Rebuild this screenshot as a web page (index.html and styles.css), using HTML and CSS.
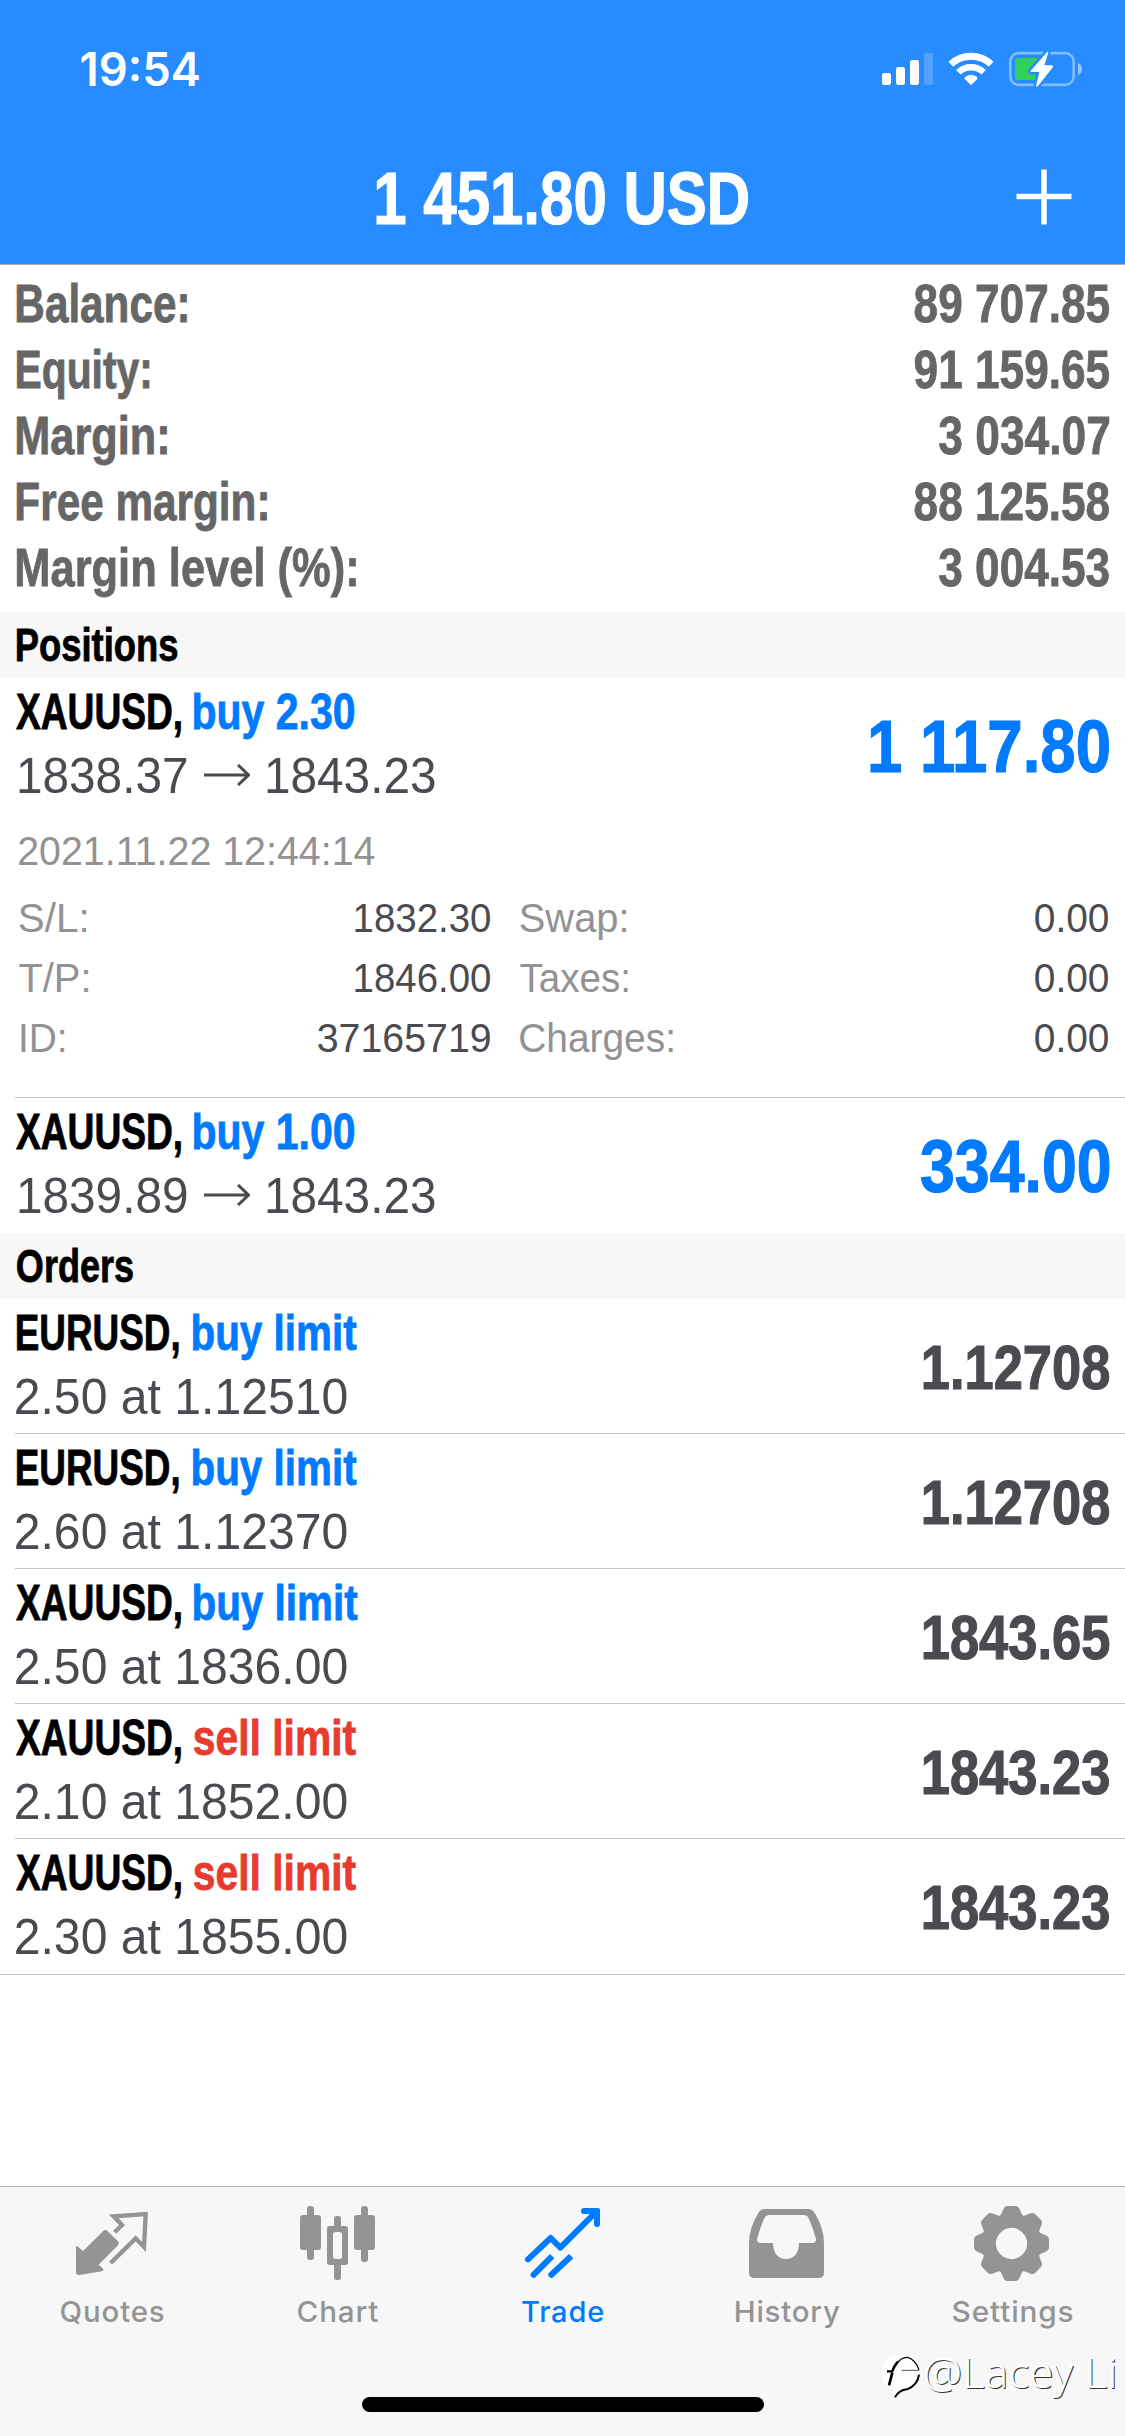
FILE: index.html
```html
<!DOCTYPE html>
<html lang="en">
<head>
<meta charset="utf-8">
<title>Trade</title>
<link rel="stylesheet" href="styles.css">
</head>
<body>
<div class="screen">
  <header class="header">
    <div class="status">
      <span class="clock" data-fit="118">19:54</span>
      <svg class="status-icons" viewBox="0 0 855 240" aria-hidden="true">
        <g fill="#fff">
          <rect x="126" y="129" width="27" height="36" rx="7"/>
          <rect x="168" y="111" width="27" height="54" rx="7"/>
          <rect x="210" y="90" width="27" height="75" rx="7"/>
          <rect x="252" y="69" width="27" height="96" rx="7" opacity=".2"/>
          <path d="M393 165L375 148Q371 144 376 140Q393 129 410 140Q415 144 411 148Z"/>
        </g>
        <g fill="none" stroke="#fff">
          <path d="M332.500 102.500A88 88 0 0 1 453.500 102.500" stroke-width="21"/>
          <path d="M355 127A55 55 0 0 1 431 127" stroke-width="19"/>
        </g>
        <rect x="511" y="69.500" width="190" height="95" rx="25" fill="none" stroke="#fff" stroke-width="8" opacity=".42"/>
        <path d="M714 99Q726 105 726 117Q726 129 714 135Z" fill="#fff" opacity=".5"/>
        <path d="M535 84H594L588 150H535Q525 150 525 140V94Q525 84 535 84Z" fill="#30d158"/>
        <path d="M622 65L572 122Q570 126 575 126H598L588 168Q590 173 594 168L639 111Q641 106 636 106H613L625 68Q625 63 622 65Z" fill="#fff" stroke="#268cff" stroke-width="15" paint-order="stroke"/>
      </svg>
    </div>
    <div class="titlebar">
      <h1 class="total" data-fit="371">1 451.80 USD</h1>
      <svg class="add" viewBox="0 0 56 56" aria-hidden="true"><path d="M28 .500V55.500M.500 27.500H55.500" stroke="#fff" stroke-width="5.500"/></svg>
    </div>
  </header>

  <main>
    <section class="summary">
      <div class="line"><span data-fit="170">Balance:</span><span data-fit="194">89 707.85</span></div>
      <div class="line"><span data-fit="132.500">Equity:</span><span data-fit="194">91 159.65</span></div>
      <div class="line"><span data-fit="150">Margin:</span><span data-fit="170">3 034.07</span></div>
      <div class="line"><span data-fit="250">Free margin:</span><span data-fit="194">88 125.58</span></div>
      <div class="line"><span data-fit="339">Margin level (%):</span><span data-fit="170">3 004.53</span></div>
    </section>

    <h2 class="section"><span data-fit="160">Positions</span></h2>
    <article class="deal open">
      <div class="deal-main">
        <div class="deal-info">
          <div class="deal-name"><span data-fit="165">XAUUSD,</span><span class="buy" data-fit="160">buy 2.30</span></div>
          <div class="deal-price move"><span data-fit="167.500">1838.37</span><svg class="arrow" viewBox="0 0 46 22" aria-hidden="true"><path d="M0 11H44M34 1L44.500 11L34 21"/></svg><span data-fit="167.500">1843.23</span></div>
        </div>
        <div class="profit" data-fit="237.500">1 117.80</div>
      </div>
      <div class="details">
        <div class="date"><span data-fit="355.500">2021.11.22 12:44:14</span></div>
        <dl class="facts">
          <dt><span data-fit="67">S/L:</span></dt><dd><span data-fit="135.500">1832.30</span></dd>
          <dt><span data-fit="106">Swap:</span></dt><dd><span data-fit="73.500">0.00</span></dd>
          <dt><span data-fit="69">T/P:</span></dt><dd><span data-fit="135.500">1846.00</span></dd>
          <dt><span data-fit="107.500">Taxes:</span></dt><dd><span data-fit="73.500">0.00</span></dd>
          <dt class="id"><span data-fit="43">ID:</span></dt><dd><span data-fit="172">37165719</span></dd>
          <dt><span data-fit="152.500">Charges:</span></dt><dd><span data-fit="73.500">0.00</span></dd>
        </dl>
      </div>
    </article>
    <article class="deal last">
      <div class="deal-main">
        <div class="deal-info">
          <div class="deal-name"><span data-fit="165">XAUUSD,</span><span class="buy" data-fit="160">buy 1.00</span></div>
          <div class="deal-price move"><span data-fit="167.500">1839.89</span><svg class="arrow" viewBox="0 0 46 22" aria-hidden="true"><path d="M0 11H44M34 1L44.500 11L34 21"/></svg><span data-fit="167.500">1843.23</span></div>
        </div>
        <div class="profit" data-fit="188">334.00</div>
      </div>
    </article>

    <h2 class="section"><span data-fit="115.500">Orders</span></h2>
    <article class="deal">
      <div class="deal-main">
        <div class="deal-info">
          <div class="deal-name euro"><span data-fit="161.500">EURUSD,</span><span class="buy" data-fit="163.500">buy limit</span></div>
          <div class="deal-price"><span data-fit="331">2.50 at 1.12510</span></div>
        </div>
        <div class="quote" data-fit="185">1.12708</div>
      </div>
    </article>
    <article class="deal">
      <div class="deal-main">
        <div class="deal-info">
          <div class="deal-name euro"><span data-fit="161.500">EURUSD,</span><span class="buy" data-fit="163.500">buy limit</span></div>
          <div class="deal-price"><span data-fit="331">2.60 at 1.12370</span></div>
        </div>
        <div class="quote" data-fit="185">1.12708</div>
      </div>
    </article>
    <article class="deal">
      <div class="deal-main">
        <div class="deal-info">
          <div class="deal-name"><span data-fit="165">XAUUSD,</span><span class="buy" data-fit="163.500">buy limit</span></div>
          <div class="deal-price"><span data-fit="331">2.50 at 1836.00</span></div>
        </div>
        <div class="quote" data-fit="185">1843.65</div>
      </div>
    </article>
    <article class="deal">
      <div class="deal-main">
        <div class="deal-info">
          <div class="deal-name"><span data-fit="165">XAUUSD,</span><span class="sell" data-fit="162">sell limit</span></div>
          <div class="deal-price"><span data-fit="331">2.10 at 1852.00</span></div>
        </div>
        <div class="quote" data-fit="185">1843.23</div>
      </div>
    </article>
    <article class="deal final">
      <div class="deal-main">
        <div class="deal-info">
          <div class="deal-name"><span data-fit="165">XAUUSD,</span><span class="sell" data-fit="162">sell limit</span></div>
          <div class="deal-price"><span data-fit="331">2.30 at 1855.00</span></div>
        </div>
        <div class="quote" data-fit="185">1843.23</div>
      </div>
    </article>
  </main>

  <footer class="footer">
    <nav class="tabs">
      <a class="tab">
        <svg viewBox="0 90 675 270" aria-hidden="true">
          <path d="M228 232Q228 225 234 230L249 243L310 183Q316 177 322 183L354 214Q359 220 354 226L296 284L308 295Q313 301 306 304L239 315Q228 316 228 306Z" fill="currentColor"/>
          <path d="M344 187L366 165L341 139L437 132L432 231L407 205L332 279" fill="none" stroke="currentColor" stroke-width="13"/>
        </svg>
        <span data-fit="102.500">Quotes</span>
      </a>
      <a class="tab">
        <svg viewBox="675 90 675 270" aria-hidden="true">
          <g fill="currentColor">
            <rect x="921" y="108" width="21" height="162" rx="9"/><rect x="900" y="135" width="63" height="105" rx="9"/>
            <rect x="1083" y="108" width="21" height="168" rx="9"/><rect x="1062" y="135" width="63" height="105" rx="9"/>
            <rect x="1002" y="138" width="21" height="40" rx="9"/><rect x="1002" y="275" width="21" height="55" rx="9"/>
            <path fill-rule="evenodd" d="M989 168H1036Q1044 168 1044 176V277Q1044 285 1036 285H989Q981 285 981 277V176Q981 168 989 168ZM1007 186Q999 186 999 194V259Q999 267 1007 267H1018Q1026 267 1026 259V194Q1026 186 1018 186Z"/>
          </g>
        </svg>
        <span data-fit="80">Chart</span>
      </a>
      <a class="tab active">
        <svg viewBox="90 90 675 270" aria-hidden="true">
          <g fill="none" stroke="currentColor" stroke-width="18" stroke-linecap="round" stroke-linejoin="round">
            <path d="M324 268L392 204L421 233L526 128"/>
            <path d="M492 123H531V162"/>
          </g>
          <g fill="currentColor">
            <path d="M518 114H532Q540 114 540 122V136L524 140L512 128Z"/>
            <path d="M390 252L403 265L348 320A9 9 0 0 1 334 308Z"/>
            <path d="M447 252L460 265L401 320A9 9 0 0 1 387 308Z"/>
          </g>
        </svg>
        <span data-fit="81">Trade</span>
      </a>
      <a class="tab">
        <svg viewBox="765 90 675 270" aria-hidden="true">
          <path fill="currentColor" fill-rule="evenodd" d="M1034 117H1165Q1177 117 1184 129Q1212 174 1212 220V308Q1212 324 1196 324H1003Q987 324 987 308V220Q987 174 1015 129Q1022 117 1034 117ZM1049 135Q1037 135 1033 145Q1019 176 1011 207Q1010 219 1022 219H1059C1059 251 1076 267 1098 267C1121 267 1137 251 1137 219H1177Q1189 219 1188 207Q1180 176 1166 145Q1162 135 1150 135Z"/>
        </svg>
        <span data-fit="103.500">History</span>
      </a>
      <a class="tab">
        <svg viewBox="180 90 675 270" aria-hidden="true">
          <defs><path id="tooth" d="M475 144Q485 134 490 118Q494 108 503 108H526Q535 108 539 118Q544 134 554 144Z"/></defs>
          <g fill="currentColor">
            <path fill-rule="evenodd" d="M514.500 131A89.500 89.500 0 1 1 514.400 131ZM514.500 173.500A47 47 0 1 0 514.600 173.500Z"/>
            <use href="#tooth"/>
            <use href="#tooth" transform="rotate(45 514.500 220.500)"/>
            <use href="#tooth" transform="rotate(90 514.500 220.500)"/>
            <use href="#tooth" transform="rotate(135 514.500 220.500)"/>
            <use href="#tooth" transform="rotate(180 514.500 220.500)"/>
            <use href="#tooth" transform="rotate(225 514.500 220.500)"/>
            <use href="#tooth" transform="rotate(270 514.500 220.500)"/>
            <use href="#tooth" transform="rotate(315 514.500 220.500)"/>
          </g>
        </svg>
        <span data-fit="119.500">Settings</span>
      </a>
    </nav>
    <div class="home"></div>
    <div class="credit">
      <svg viewBox="18 28 120 132" aria-hidden="true">
        <path d="M76 30C42 30 18 56 18 84C18 108 34 128 58 134L54 158C66 140 74 140 88 138C114 134 134 112 134 82C134 50 110 30 76 30Z" fill="#fff"/>
        <g fill="none" stroke="#000">
          <path d="M53 78L66 57Q78 37 98 38Q122 45 132 76" stroke-width="3.500"/>
          <path d="M36 80H52Q58 60 70 50" stroke-width="7"/>
          <path d="M80 77H132" stroke-width="3" stroke="#555"/>
          <path d="M52 84L42 122" stroke-width="8"/>
          <path d="M132 90Q128 122 96 134Q72 136 60 158" stroke-width="6"/>
        </g>
      </svg>
      <span data-fit="189">@Lacey Li</span>
    </div>
  </footer>
</div>
<script src="fit.js"></script>
</body>
</html>
```
FILE: styles.css
```css
* { box-sizing: border-box; }
body {
  margin: 0;
  background: #fff;
  font-family: "Liberation Sans", Arial, sans-serif;
  color: #4b4a50;
}
h1, h2, dl, dd { margin: 0; }
svg { display: block; flex: none; }

.screen {
  width: 1125px;
  height: 2436px;
  display: flex;
  flex-direction: column;
  overflow: hidden;
}
main { flex: 1; }

[data-fit] { display: block; flex: none; white-space: nowrap; }
[data-fit] > i { display: inline-block; font-style: normal; transform-origin: 0 50%; }

.header {
  height: 265px;
  background: #268cff;
  border-bottom: 1px solid #a9aeb4;
  color: #fff;
}
.status {
  height: 110px;
  padding: 30px 0 0 81px;
  display: flex;
  justify-content: space-between;
}
.clock { font: 600 46px/78px Inter, sans-serif; }
.status-icons { width: 285px; height: 80px; }
.titlebar {
  height: 154px;
  padding: 22px 53px 0 376.500px;
  display: flex;
  justify-content: space-between;
}
.total { font-size: 75px; font-weight: 700; line-height: 132px; }
.add { width: 56px; height: 56px; margin-top: 37px; }

/* Slight stroke restores the stem weight lost by condensing */
.total, .profit, .quote { -webkit-text-stroke: 1.2px currentColor; }
.line, .section, .deal-name { -webkit-text-stroke: .8px currentColor; }

.summary { padding: 6px 16.5px 11px 17px; }
.line {
  display: flex;
  justify-content: space-between;
  font-size: 53px;
  font-weight: 700;
  line-height: 66px;
  height: 66px;
  color: #666;
}

.section {
  height: 66px;
  padding-left: 17px;
  background: #f7f7f7;
  color: #000;
  font-size: 46px;
  line-height: 66px;
}

.deal {
  margin-left: 15px;
  border-bottom: 1px solid #c5c5c7;
}
.deal.last { border-bottom: 0; }
.deal.final { margin-left: 0; padding: 0 0 1px 15px; }
.deal-main {
  height: 134px;
  padding-right: 16.5px;
  display: flex;
  justify-content: space-between;
}
.last .deal-main, .open .deal-main { height: 135px; }
.deal-info { padding-top: 1px; }
.deal-name {
  display: flex;
  gap: 13px;
  padding-left: 1px;
  font-size: 50px;
  font-weight: 700;
  line-height: 67px;
  color: #000;
}
.deal-name.euro { padding-left: 2px; gap: 14px; }
.deal-name .buy { color: #007aff; }
.deal-name .sell { color: #e63b2e; }
.deal-price {
  display: flex;
  padding-left: 1px;
  font-size: 50px;
  line-height: 60px;
}
.deal-price.move { gap: 17px; padding-left: 4px; }
.arrow { width: 46px; height: 22px; margin-top: 18px; fill: none; stroke: #4b4a50; stroke-width: 3; }
.profit { font-size: 75px; font-weight: 700; line-height: 136px; color: #007aff; }
.quote { font-size: 62.5px; font-weight: 700; line-height: 137px; }

.details { padding: 8px 16.5px 29px 3.5px; font-size: 40.5px; line-height: 60px; }
.date { color: #929292; }
.facts {
  display: grid;
  grid-template-columns: 132px 339.500px 184px 1fr;
  margin-top: 7px;
}
.facts dt { color: #929292; }
.facts dt.id { padding-left: 2px; }
.facts dd { display: flex; justify-content: flex-end; }
.facts dt:nth-of-type(even) { padding-left: 30px; }

.footer {
  position: relative;
  height: 250px;
  background: #f7f7f7;
  border-top: 1px solid #b0b0b0;
}
.tabs { display: grid; grid-template-columns: repeat(5, 1fr); padding-top: 13px; }
.tab {
  display: flex;
  flex-direction: column;
  align-items: center;
  color: #949494;
  font: 500 29px/40px Inter, sans-serif;
  letter-spacing: .8px;
}
.tab svg { width: 225px; height: 90px; }
.tab span { margin-top: 2px; }
.tab.active { color: #007aff; }
.home {
  width: 402px;
  height: 15px;
  margin: 65px auto 0;
  border-radius: 8px;
  background: #000;
}
.credit {
  position: absolute;
  left: 881px;
  top: 167px;
  display: flex;
  gap: 4px;
  font: 300 42px/50px "Noto Sans", sans-serif;
  color: #fff;
  text-shadow: 1px 1px 0 #333;
}
.credit svg { width: 40px; height: 44px; }
.credit span { margin-top: -7px; }
```
FILE: fit.js
```js
// Condenses each [data-fit] text so its inked width equals the given number of pixels.
// Measured at ten times the size, because ink bounds are rounded to whole pixels.
const pen = document.createElement('canvas').getContext('2d');
document.querySelectorAll('[data-fit]').forEach((el) => {
  const cs = getComputedStyle(el);
  const text = el.textContent;
  pen.font = `${cs.fontWeight} ${parseFloat(cs.fontSize) * 10}px ${cs.fontFamily}`;
  pen.letterSpacing = `${(parseFloat(cs.letterSpacing) || 0) * 10}px`;
  const m = pen.measureText(text);
  const left = m.actualBoundingBoxLeft / 10;
  const width = parseFloat(el.dataset.fit);
  const scale = width / (left + m.actualBoundingBoxRight / 10);
  const inner = document.createElement('i');
  inner.textContent = text;
  inner.style.transform = `translateX(${left * scale}px) scaleX(${scale})`;
  el.replaceChildren(inner);
  el.style.width = `${width}px`;
});
```
